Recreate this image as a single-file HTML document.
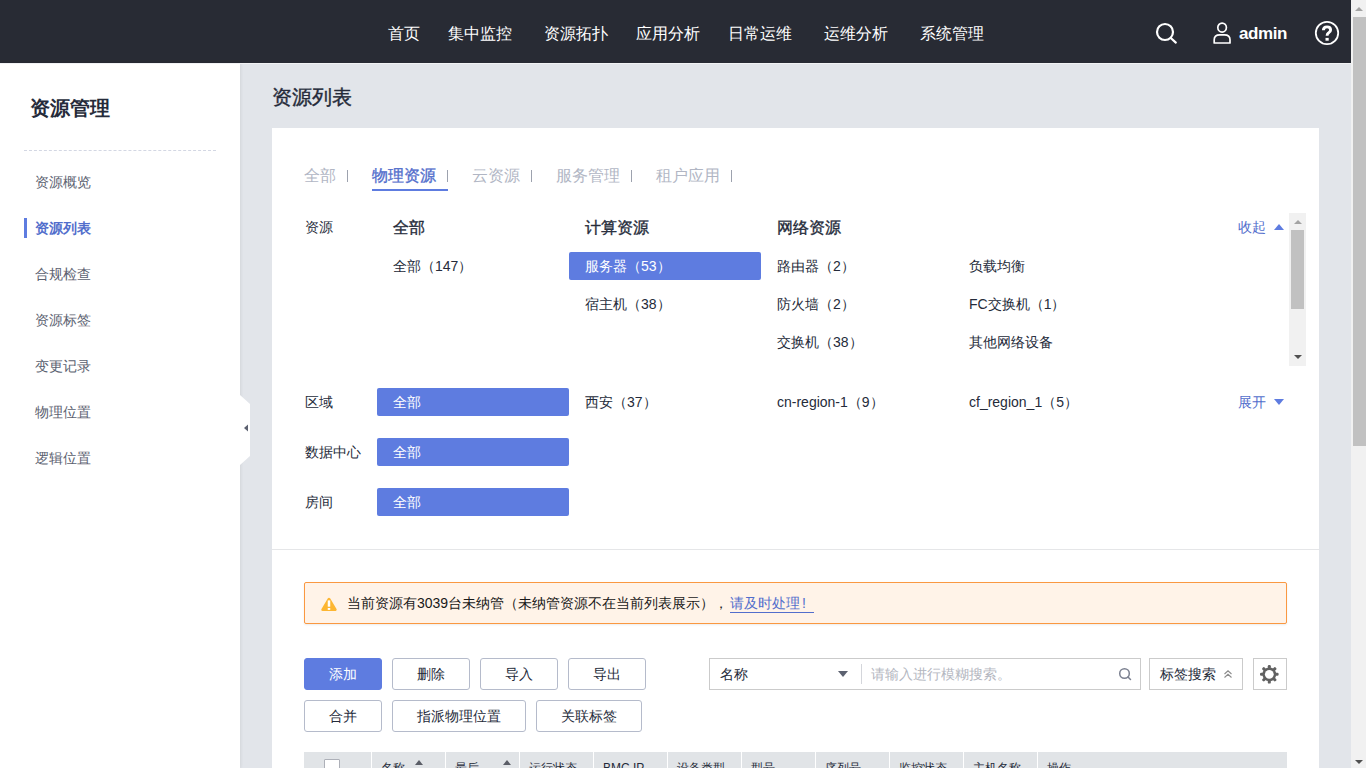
<!DOCTYPE html>
<html><head><meta charset="utf-8">
<style>
*{margin:0;padding:0;box-sizing:border-box}
html,body{width:1366px;height:768px;overflow:hidden;background:#e2e5ea;font-family:"Liberation Sans",sans-serif;}
.abs{position:absolute}
#hdr{position:absolute;left:0;top:0;width:1351px;height:63px;background:#282b34}
.nav{position:absolute;top:22.5px;height:22px;line-height:22px;font-size:16px;font-weight:500;color:#fff;white-space:nowrap}
#side{position:absolute;left:0;top:63px;width:240px;height:705px;background:#fff;box-shadow:1px 0 3px rgba(0,0,0,0.07)}
.mi{position:absolute;left:35px;font-size:14px;color:#5b6170;line-height:20px;white-space:nowrap}
#vs{position:absolute;left:1351px;top:0;width:15px;height:768px;background:#f1f1f1}
.t{position:absolute;white-space:nowrap;line-height:20px}

.tab{position:absolute;top:166px;height:20px;line-height:20px;font-size:16px;color:#b1b6c4;white-space:nowrap}
.sep{position:absolute;top:170px;width:1px;height:12px;background:#9da2ae}
.fl{position:absolute;font-size:14px;color:#252b3a;line-height:20px;white-space:nowrap}
.fh{position:absolute;font-size:16px;font-weight:500;-webkit-text-stroke:0.35px #252b3a;color:#252b3a;line-height:22px;white-space:nowrap}
.box{position:absolute;height:28px;width:192px;background:#5e7ce0;border-radius:2px}
.fw{position:absolute;font-size:14px;color:#fff;line-height:20px;white-space:nowrap}
.btn{position:absolute;height:32px;border:1px solid #b5bbcb;border-radius:3px;background:#fff;font-size:14px;color:#252b3a;text-align:center;line-height:30px;white-space:nowrap}
.th{position:absolute;top:752px;height:40px;background:#e1e4e7}
.tht{position:absolute;top:758px;font-size:12px;color:#252b3a;line-height:20px;white-space:nowrap}
.tri{position:absolute;width:0;height:0;border-left:5px solid transparent;border-right:5px solid transparent}
</style></head><body>
<div id="hdr">
  <div class="nav" style="left:388px">首页</div>
  <div class="nav" style="left:448px">集中监控</div>
  <div class="nav" style="left:544px">资源拓扑</div>
  <div class="nav" style="left:636px">应用分析</div>
  <div class="nav" style="left:728px">日常运维</div>
  <div class="nav" style="left:824px">运维分析</div>
  <div class="nav" style="left:920px">系统管理</div>
</div>
<div id="side">
  <div class="abs" style="left:30px;top:31px;font-size:20px;font-weight:bold;color:#252b3a;line-height:28px">资源管理</div>
  <div class="abs" style="left:24px;top:87px;width:192px;border-top:1px dashed #d3d7e3"></div>
  <div class="mi" style="top:109px">资源概览</div>
  <div class="abs" style="left:24px;top:155px;width:3px;height:20px;background:#5e7ce0"></div>
  <div class="mi" style="top:155px;color:#526ecc;font-weight:bold">资源列表</div>
  <div class="mi" style="top:201px">合规检查</div>
  <div class="mi" style="top:247px">资源标签</div>
  <div class="mi" style="top:293px">变更记录</div>
  <div class="mi" style="top:339px">物理位置</div>
  <div class="mi" style="top:385px">逻辑位置</div>
</div>
<div id="vs"></div>
<div class="abs" style="left:0;top:63px;width:1351px;height:1px;background:#f1f2f4"></div>
<!-- header right icons -->
<svg class="abs" style="left:1150px;top:17px" width="32" height="32" viewBox="0 0 32 32">
  <circle cx="15" cy="15" r="8" fill="none" stroke="#fff" stroke-width="2.2"/>
  <line x1="20.8" y1="21" x2="25.8" y2="25.6" stroke="#fff" stroke-width="2.2" stroke-linecap="round"/>
</svg>
<svg class="abs" style="left:1210px;top:20px" width="24" height="26" viewBox="0 0 24 26">
  <ellipse cx="12.1" cy="7.6" rx="4.3" ry="4.5" fill="none" stroke="#fff" stroke-width="1.7"/>
  <path d="M4.2,23 V19.8 C4.2,16.6 6.6,14.9 9.8,14.9 H14.4 C17.6,14.9 20,16.6 20,19.8 V23 Z" fill="none" stroke="#fff" stroke-width="1.7" stroke-linejoin="round"/>
</svg>
<div class="abs" style="left:1239px;top:23px;font-size:17px;font-weight:bold;color:#fff;line-height:22px;letter-spacing:-0.4px">admin</div>
<svg class="abs" style="left:1312px;top:18px" width="30" height="30" viewBox="0 0 30 30">
  <circle cx="15" cy="15" r="11.2" fill="none" stroke="#fff" stroke-width="1.8"/>
  <path d="M11.4,12.2 C11.4,10 13,8.9 15.1,8.9 C17.3,8.9 18.6,10.1 18.6,11.9 C18.6,13.6 17.4,14.3 16.4,15 C15.5,15.6 15.1,16.3 15.1,17.8" fill="none" stroke="#fff" stroke-width="2.9"/>
  <rect x="13.5" y="19.9" width="3.2" height="2.8" fill="#fff"/>
</svg>

<div class="t" style="left:272px;top:85px;font-size:20px;font-weight:500;-webkit-text-stroke:0.4px #252b3a;color:#252b3a;line-height:24px">资源列表</div>
<div class="abs" style="left:272px;top:128px;width:1047px;height:640px;background:#fff"></div>

<!-- tabs -->
<div class="tab" style="left:304px">全部</div><div class="sep" style="left:347px"></div>
<div class="tab" style="left:372px;color:#526ecc;font-weight:500;-webkit-text-stroke:0.35px #526ecc">物理资源</div><div class="sep" style="left:447px"></div>
<div class="abs" style="left:372px;top:189px;width:76px;height:2px;background:#5e7ce0"></div>
<div class="tab" style="left:472px">云资源</div><div class="sep" style="left:531px"></div>
<div class="tab" style="left:556px">服务管理</div><div class="sep" style="left:631px"></div>
<div class="tab" style="left:656px">租户应用</div><div class="sep" style="left:731px"></div>

<!-- filter resource -->
<div class="fl" style="left:305px;top:217px">资源</div>
<div class="fh" style="left:393px;top:217px">全部</div>
<div class="fh" style="left:585px;top:217px">计算资源</div>
<div class="fh" style="left:777px;top:217px">网络资源</div>
<div class="fl" style="left:1238px;top:217px;color:#526ecc">收起</div>
<div class="tri" style="left:1274px;top:224px;border-bottom:6px solid #5e7ce0"></div>

<div class="fl" style="left:393px;top:256px">全部（147）</div>
<div class="box" style="left:569px;top:252px"></div>
<div class="fw" style="left:585px;top:256px">服务器（53）</div>
<div class="fl" style="left:777px;top:256px">路由器（2）</div>
<div class="fl" style="left:969px;top:256px">负载均衡</div>
<div class="fl" style="left:585px;top:294px">宿主机（38）</div>
<div class="fl" style="left:777px;top:294px">防火墙（2）</div>
<div class="fl" style="left:969px;top:294px">FC交换机（1）</div>
<div class="fl" style="left:777px;top:332px">交换机（38）</div>
<div class="fl" style="left:969px;top:332px">其他网络设备</div>

<!-- inner scrollbar -->
<div class="abs" style="left:1289px;top:213px;width:17px;height:153px;background:#f1f1f1"></div>
<div class="abs" style="left:1291px;top:230px;width:13px;height:79px;background:#c1c1c1"></div>
<div class="tri" style="left:1294px;top:220px;border-left-width:4px;border-right-width:4px;border-bottom:4px solid #a3a3a3"></div>
<div class="tri" style="left:1294px;top:355px;border-left-width:4px;border-right-width:4px;border-top:4px solid #505050"></div>

<!-- region rows -->
<div class="fl" style="left:305px;top:392px">区域</div>
<div class="box" style="left:377px;top:388px"></div>
<div class="fw" style="left:393px;top:392px">全部</div>
<div class="fl" style="left:585px;top:392px">西安（37）</div>
<div class="fl" style="left:777px;top:392px">cn-region-1（9）</div>
<div class="fl" style="left:969px;top:392px">cf_region_1（5）</div>
<div class="fl" style="left:1238px;top:392px;color:#526ecc">展开</div>
<div class="tri" style="left:1274px;top:399px;border-top:6px solid #5e7ce0"></div>

<div class="fl" style="left:305px;top:442px">数据中心</div>
<div class="box" style="left:377px;top:438px"></div>
<div class="fw" style="left:393px;top:442px">全部</div>
<div class="fl" style="left:305px;top:492px">房间</div>
<div class="box" style="left:377px;top:488px"></div>
<div class="fw" style="left:393px;top:492px">全部</div>

<div class="abs" style="left:272px;top:549px;width:1047px;height:1px;background:#e5e6e8"></div>

<!-- alert -->
<div class="abs" style="left:304px;top:582px;width:983px;height:42px;background:#fff3e8;border:1px solid #fa9841;border-radius:2px;box-shadow:0 1px 2px rgba(0,0,0,0.08)"></div>
<svg class="abs" style="left:320px;top:596px" width="18" height="16" viewBox="0 0 18 16">
  <path d="M9,3 L15.4,13.7 H2.6 Z" fill="#fdb632" stroke="#fdb632" stroke-width="2.6" stroke-linejoin="round"/>
  <rect x="7.75" y="4.4" width="2.5" height="6.3" fill="#fff"/>
  <rect x="7.75" y="12" width="2.5" height="1.9" fill="#fff"/>
</svg>
<div class="fl" style="left:347px;top:593px;color:#191919">当前资源有3039台未纳管（未纳管资源不在当前列表展示），</div>
<div class="fl" style="left:730px;top:593px;color:#526ecc">请及时处理<span style="margin-left:2px">!</span></div>
<div class="abs" style="left:730px;top:612px;width:84px;height:1px;background:#526ecc"></div>

<!-- buttons -->
<div class="btn" style="left:304px;top:658px;width:78px;background:#5e7ce0;border-color:#5e7ce0;color:#fff">添加</div>
<div class="btn" style="left:392px;top:658px;width:78px">删除</div>
<div class="btn" style="left:480px;top:658px;width:78px">导入</div>
<div class="btn" style="left:568px;top:658px;width:78px">导出</div>
<div class="btn" style="left:304px;top:700px;width:78px">合并</div>
<div class="btn" style="left:392px;top:700px;width:134px">指派物理位置</div>
<div class="btn" style="left:536px;top:700px;width:106px">关联标签</div>

<!-- search -->
<div class="abs" style="left:709px;top:658px;width:432px;height:32px;border:1px solid #cbcbcb;background:#fff"></div>
<div class="fl" style="left:720px;top:664px">名称</div>
<div class="tri" style="left:838px;top:671px;border-top:6px solid #5c6170"></div>
<div class="abs" style="left:861px;top:664px;width:1px;height:20px;background:#d4d6db"></div>
<div class="fl" style="left:871px;top:664px;color:#b4b7bf">请输入进行模糊搜索。</div>
<svg class="abs" style="left:1116px;top:665px" width="18" height="18" viewBox="0 0 18 18">
  <circle cx="8.5" cy="8.5" r="4.8" fill="none" stroke="#7b8090" stroke-width="1.5"/>
  <line x1="12" y1="12" x2="14.5" y2="14.5" stroke="#7b8090" stroke-width="1.5" stroke-linecap="round"/>
</svg>
<div class="abs" style="left:1149px;top:658px;width:94px;height:32px;border:1px solid #cbcbcb;background:#fff"></div>
<div class="fl" style="left:1160px;top:664px">标签搜索</div>
<svg class="abs" style="left:1222px;top:668px" width="12" height="12" viewBox="0 0 12 12">
  <path d="M2.5,6 L6,2.8 L9.5,6 M2.5,9.5 L6,6.3 L9.5,9.5" fill="none" stroke="#8c8c8c" stroke-width="1.1"/>
</svg>
<div class="abs" style="left:1253px;top:658px;width:34px;height:32px;border:1px solid #cbcbcb;background:#fff"></div>
<svg class="abs" style="left:1259px;top:664px" width="20" height="20" viewBox="0 0 20 20">
  <g fill="#616161">
    <circle cx="10.3" cy="10.3" r="6.9"/>
    <rect x="8.8" y="1" width="3" height="18.6" rx="1.2"/>
    <rect x="8.8" y="1" width="3" height="18.6" rx="1.2" transform="rotate(45 10.3 10.3)"/>
    <rect x="8.8" y="1" width="3" height="18.6" rx="1.2" transform="rotate(90 10.3 10.3)"/>
    <rect x="8.8" y="1" width="3" height="18.6" rx="1.2" transform="rotate(135 10.3 10.3)"/>
  </g>
  <circle cx="10.3" cy="10.3" r="4.4" fill="#fff"/>
</svg>

<!-- table header -->
<div class="th" style="left:304px;width:67px"></div>
<div class="th" style="left:372px;width:73px"></div>
<div class="th" style="left:446px;width:73px"></div>
<div class="th" style="left:520px;width:73px"></div>
<div class="th" style="left:594px;width:73px"></div>
<div class="th" style="left:668px;width:73px"></div>
<div class="th" style="left:742px;width:73px"></div>
<div class="th" style="left:816px;width:73px"></div>
<div class="th" style="left:890px;width:73px"></div>
<div class="th" style="left:964px;width:73px"></div>
<div class="th" style="left:1038px;width:249px"></div>
<div class="abs" style="left:324px;top:759px;width:16px;height:16px;border:1px solid #adb0b8;background:#fff;border-radius:1px"></div>
<div class="tht" style="left:381px">名称</div>
<div class="tri" style="left:415px;top:760px;border-left-width:4px;border-right-width:4px;border-bottom:5px solid #5a5d66"></div>
<div class="tht" style="left:455px">最后</div>
<div class="tri" style="left:503px;top:760px;border-left-width:4px;border-right-width:4px;border-bottom:5px solid #5a5d66"></div>
<div class="tht" style="left:529px">运行状态</div>
<div class="tht" style="left:603px">BMC IP</div>
<div class="tht" style="left:677px">设备类型</div>
<div class="tht" style="left:751px">型号</div>
<div class="tht" style="left:825px">序列号</div>
<div class="tht" style="left:899px">监控状态</div>
<div class="tht" style="left:973px">主机名称</div>
<div class="tht" style="left:1047px">操作</div>

<!-- sidebar tab -->
<svg class="abs" style="left:240px;top:395px" width="12" height="72" viewBox="0 0 12 72">
  <path d="M0,0 L10,9 V61 L0,70 Z" fill="#fff"/>
  <path d="M8,29.6 V36.6 L4,33.1 Z" fill="#5c6170"/>
</svg>

<!-- page scrollbar -->
<div class="abs" style="left:1353px;top:17px;width:13px;height:429px;background:#c1c1c1"></div>
<div class="tri" style="left:1355px;top:7px;border-left-width:4px;border-right-width:4px;border-bottom:4px solid #a3a3a3"></div>
<div class="tri" style="left:1355px;top:760px;border-left-width:4px;border-right-width:4px;border-top:4px solid #505050"></div>
</body></html>
